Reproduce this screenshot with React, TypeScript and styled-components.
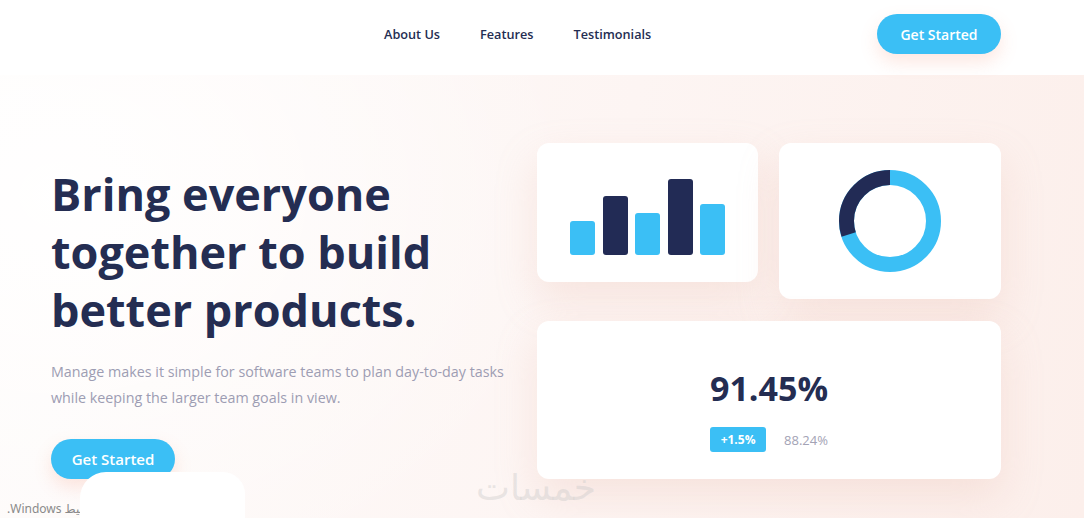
import styled, { createGlobalStyle } from 'styled-components'

const GlobalStyle = createGlobalStyle`
  * {
    box-sizing: border-box;
  }
  body {
    margin: 0;
    font-family: 'Open Sans', 'Noto Sans', sans-serif;
    background: #ffffff;
    color: #242d52;
  }
`

const Page = styled.div`
  position: relative;
  width: 1084px;
  height: 518px;
  overflow: hidden;
  background: #ffffff;
`

const Header = styled.header`
  height: 75px;
  display: flex;
  align-items: flex-start;
  padding: 14px 83px 0 51px;
`

const Nav = styled.nav`
  display: flex;
  align-items: center;
  height: 40px;
  gap: 40px;
  margin-left: 333px;
`

const NavLink = styled.a`
  font-size: 12.7px;
  font-weight: 600;
  color: #242d52;
  text-decoration: none;
`

const PillButton = styled.button<{ $size?: number }>`
  width: 124px;
  height: 40px;
  border: none;
  border-radius: 20px;
  background: #3bbff5;
  color: #ffffff;
  font-family: 'Open Sans', sans-serif;
  font-size: ${(p) => p.$size || 14}px;
  font-weight: 600;
  box-shadow: 0 8px 18px rgba(242, 120, 90, 0.18);
  cursor: pointer;
`

const HeaderButton = styled(PillButton)`
  margin-left: auto;
`

const Hero = styled.section`
  height: 443px;
  display: flex;
  align-items: flex-start;
  padding: 0 0 0 51px;
  background:
    radial-gradient(ellipse 520px 420px at 60px 120px, rgba(255, 255, 255, 0.95), rgba(255, 255, 255, 0) 100%),
    linear-gradient(100deg, #fefbfa 0%, #fdf5f3 55%, #fcefeb 100%);
`

const Copy = styled.div`
  width: 486px;
  padding-top: 90px;
`

const Title = styled.h1`
  margin: 0;
  font-size: 45px;
  line-height: 58px;
  font-weight: 700;
  color: #242d52;
`

const Lead = styled.p`
  margin: 20px 0 28px;
  font-size: 14.3px;
  line-height: 26px;
  color: #9d9db3;
`

const Cards = styled.div`
  display: grid;
  grid-template-columns: 221px 222px;
  column-gap: 21px;
  row-gap: 22px;
  padding-top: 68px;
  align-items: start;
  align-content: start;
`

const Card = styled.div<{ $h: number }>`
  height: ${(p) => p.$h}px;
  background: #ffffff;
  border-radius: 12px;
  box-shadow: 0 18px 40px rgba(232, 180, 165, 0.25);
`

const BarCard = styled(Card)`
  display: flex;
  align-items: flex-end;
  justify-content: center;
  gap: 7.5px;
  padding-bottom: 27px;
`

const Bar = styled.div<{ $dark?: boolean }>`
  width: 25px;
  border-radius: 3px;
  background: ${(p) => (p.$dark ? '#222b55' : '#3bbff5')};
`

const DonutCard = styled(Card)`
  display: flex;
  align-items: center;
  justify-content: center;
`

const StatCard = styled(Card)`
  grid-column: 1 / span 2;
  display: flex;
  flex-direction: column;
  align-items: center;
  padding-top: 44px;
`

const StatValue = styled.div`
  font-size: 34px;
  line-height: 46px;
  font-weight: 700;
  color: #242d52;
`

const StatRow = styled.div`
  display: flex;
  align-items: center;
  gap: 18px;
  margin-top: 16px;
`

const Badge = styled.span`
  width: 56px;
  height: 25px;
  display: flex;
  align-items: center;
  justify-content: center;
  border-radius: 3px;
  background: #3bbff5;
  color: #ffffff;
  font-size: 12px;
  font-weight: 700;
`

const Muted = styled.span`
  font-size: 13px;
  color: #a3a3b5;
`

const Watermark = styled.div`
  position: absolute;
  left: 476px;
  top: 462px;
  font-family: 'Noto Sans', 'DejaVu Sans', sans-serif;
  font-size: 36px;
  color: rgba(200, 200, 200, 0.4);
`

const Cover = styled.div`
  position: absolute;
  left: 80px;
  top: 472px;
  width: 165px;
  height: 60px;
  background: #ffffff;
  border-radius: 26px 22px 0 0;
`

const Activate = styled.div`
  position: absolute;
  left: 7px;
  top: 500px;
  direction: rtl;
  font-family: 'Noto Sans', 'DejaVu Sans', sans-serif;
  font-size: 12px;
  color: #8a8a8a;
`

const bars = [
  { h: 34, dark: false },
  { h: 59, dark: true },
  { h: 42, dark: false },
  { h: 76, dark: true },
  { h: 51, dark: false },
]

const Donut = () => {
  const r = 43.5
  const c = 2 * Math.PI * r
  const dark = 0.3
  return (
    <svg width="102" height="102" viewBox="0 0 102 102">
      <g transform="rotate(-90 51 51)">
        <circle cx="51" cy="51" r={r} fill="none" stroke="#3bbff5" strokeWidth="15" />
        <circle
          cx="51"
          cy="51"
          r={r}
          fill="none"
          stroke="#222b55"
          strokeWidth="15"
          strokeDasharray={`${c * dark} ${c}`}
          transform="scale(1 -1) translate(0 -102)"
        />
      </g>
    </svg>
  )
}

const App: React.FC = () => {
  return (
    <Page>
      <GlobalStyle />
      <Header>
        <Nav>
          <NavLink href="#">About Us</NavLink>
          <NavLink href="#">Features</NavLink>
          <NavLink href="#">Testimonials</NavLink>
        </Nav>
        <HeaderButton>Get Started</HeaderButton>
      </Header>
      <Hero>
        <Copy>
          <Title>
            Bring everyone together to build better products.
          </Title>
          <Lead>
            Manage makes it simple for software teams to plan day-to-day tasks while keeping the
            larger team goals in view.
          </Lead>
          <PillButton $size={15}>Get Started</PillButton>
        </Copy>
        <Cards>
          <BarCard $h={139}>
            {bars.map((b, i) => (
              <Bar key={i} $dark={b.dark} style={{ height: b.h }} />
            ))}
          </BarCard>
          <DonutCard $h={156}>
            <Donut />
          </DonutCard>
          <StatCard $h={158}>
            <StatValue>91.45%</StatValue>
            <StatRow>
              <Badge>+1.5%</Badge>
              <Muted>88.24%</Muted>
            </StatRow>
          </StatCard>
        </Cards>
      </Hero>
      <Watermark>خمسات</Watermark>
      <Activate>تنشيط Windows.</Activate>
      <Cover />
    </Page>
  )
}

export default App
